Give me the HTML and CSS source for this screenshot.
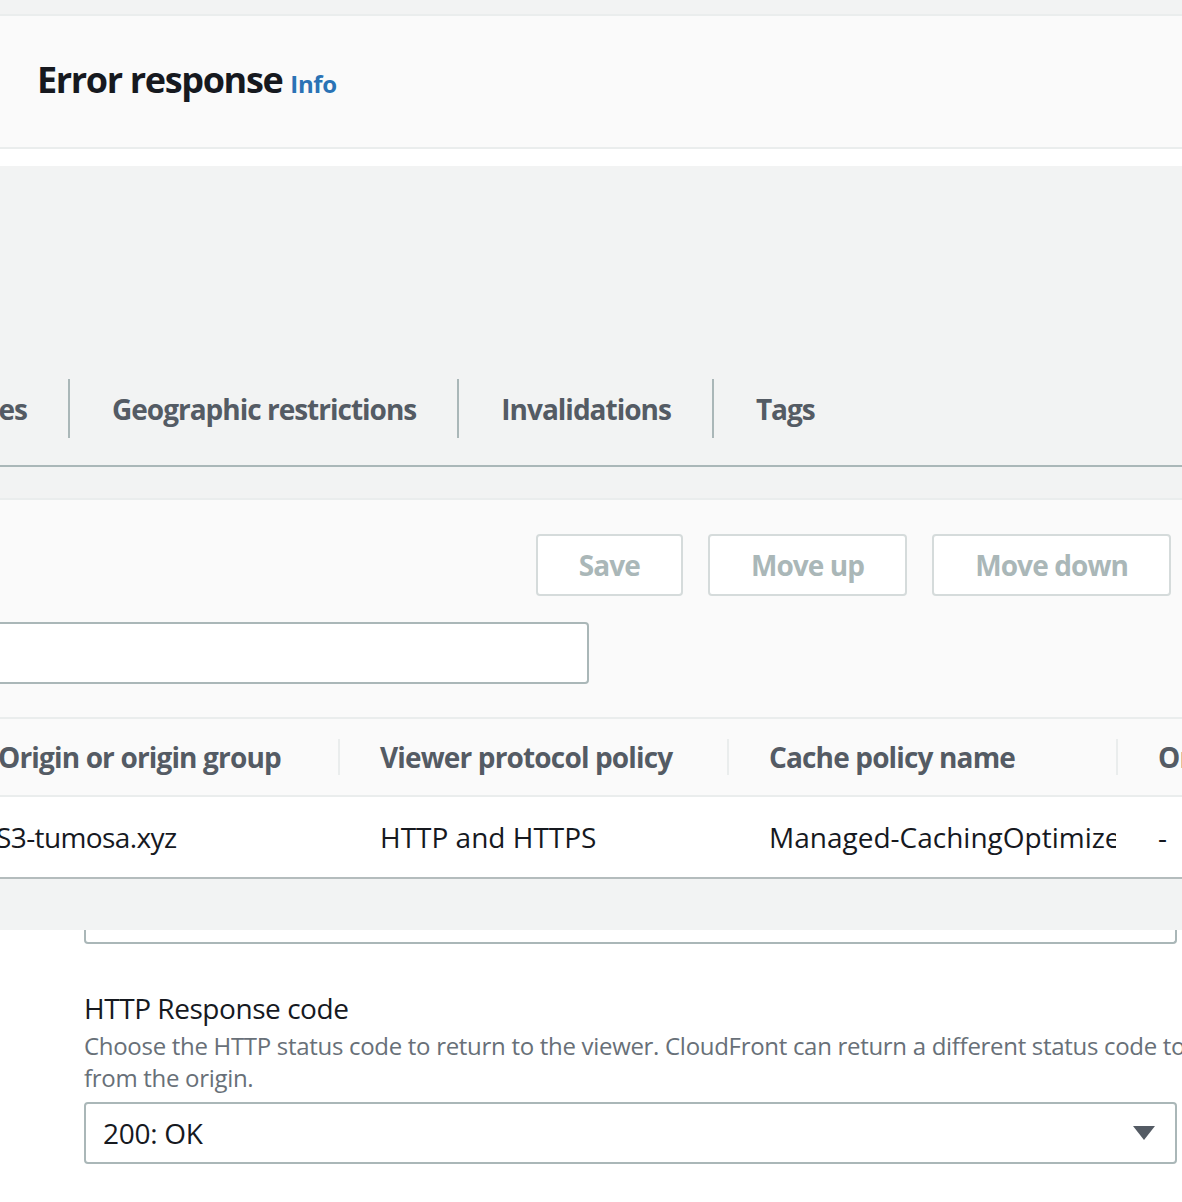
FILE: index.html
```html
<!DOCTYPE html>
<html lang="en">
<head>
<meta charset="utf-8">
<title>Error response</title>
<link rel="stylesheet" href="styles.css">
</head>
<body>
<div class="top-band"></div>
<header class="page-header">
  <h1 class="page-title">Error response<a class="info-link" href="#">Info</a></h1>
</header>
<div class="spacer"></div>
<div class="tabs-area">
  <nav class="tabs">
    <span class="tab tab-first">Error pages</span>
    <span class="tab">Geographic restrictions</span>
    <span class="tab">Invalidations</span>
    <span class="tab">Tags</span>
  </nav>
</div>
<section class="behaviors">
  <div class="actions">
    <button class="btn" disabled>Save</button>
    <button class="btn" disabled>Move up</button>
    <button class="btn" disabled>Move down</button>
  </div>
  <div class="search-row">
    <input class="search" type="text" aria-label="Filter">
  </div>
</section>
<div class="table">
  <div class="thead">
    <div class="th th-first">Origin or origin group</div>
    <div class="th">Viewer protocol policy</div>
    <div class="th">Cache policy name</div>
    <div class="th">Origin request policy</div>
  </div>
  <div class="trow">
    <div class="td">S3-tumosa.xyz</div>
    <div class="td">HTTP and HTTPS</div>
    <div class="td">Managed-CachingOptimized</div>
    <div class="td">-</div>
  </div>
</div>
<div class="gray-strip"></div>
<main class="form">
  <div class="field-tail"></div>
  <div class="field">
    <label class="label" for="code">HTTP Response code</label>
    <p class="desc">Choose the HTTP status code to return to the viewer. CloudFront can return a different status code to the viewer than the one it received<br>from the origin.</p>
    <div class="select" id="code">
      <span class="select-value">200: OK</span>
      <svg class="caret" width="22" height="16" viewBox="0 0 22 16" aria-hidden="true"><path d="M0 1h22L11 15z" fill="#545b64"/></svg>
    </div>
  </div>
</main>
</body>
</html>
```

FILE: styles.css
```css
* { box-sizing: border-box; }
html, body { margin: 0; padding: 0; }
body {
  width: 1182px;
  height: 1202px;
  overflow: hidden;
  background: #ffffff;
  font-family: "Open Sans", "Noto Sans", sans-serif;
  color: #16191f;
}
.top-band {
  height: 14px;
  background: #f2f3f3;
}
.page-header {
  height: 135px;
  background: #fafafa;
  border-top: 2px solid #eaeded;
  border-bottom: 2px solid #eaeded;
  display: flex;
  align-items: center;
  padding-left: 37px;
}
.page-title {
  margin: 0;
  font-size: 36px;
  font-weight: 700;
  line-height: 44px;
  color: #16191f;
  letter-spacing: -1.35px;
}
.info-link {
  font-size: 24px;
  font-weight: 700;
  color: #2a72b5;
  text-decoration: none;
  margin-left: 8px;
  letter-spacing: -0.4px;
}
.spacer {
  height: 17px;
  background: #ffffff;
}
.tabs-area {
  height: 332px;
  background: #f2f3f3;
  padding-top: 213px;
}
.tabs {
  display: flex;
  height: 88px;
  border-bottom: 2px solid #aab7b8;
}
.tab {
  flex: none;
  height: 59px;
  line-height: 61px;
  padding: 0 41px 0 42px;
  border-left: 2px solid #aab7b8;
  font-size: 28px;
  font-weight: 700;
  color: #545b64;
  white-space: nowrap;
  letter-spacing: -1px;
}
.tab-first {
  width: 68px;
  border-left: none;
  padding: 0 41px 0 0;
  display: flex;
  justify-content: flex-end;
}
.behaviors {
  height: 221px;
  background: #fafafa;
  border-top: 2px solid #eaeded;
  border-bottom: 2px solid #eaeded;
  padding-top: 34px;
}
.actions {
  display: flex;
  justify-content: flex-end;
  gap: 25px;
  padding-right: 11px;
}
.btn {
  height: 62px;
  padding: 0 41px;
  background: #ffffff;
  border: 2px solid #d5dbdb;
  border-radius: 4px;
  font-family: inherit;
  font-size: 28px;
  font-weight: 700;
  color: #aab7b8;
  letter-spacing: -0.9px;
}
.search-row {
  margin-top: 26px;
  display: flex;
}
.search {
  width: 620px;
  height: 62px;
  margin-left: -31px;
  background: #ffffff;
  border: 2px solid #aab7b8;
  border-radius: 4px;
}
.table {
  margin-left: -44px;
  width: 1300px;
}
.thead, .trow {
  display: grid;
  grid-template-columns: 382px 389px 389px 140px;
}
.thead {
  height: 78px;
  background: #fafafa;
  border-bottom: 2px solid #eaeded;
  align-items: center;
}
.th {
  height: 36px;
  line-height: 37px;
  padding-left: 40px;
  border-left: 2px solid #eaeded;
  font-size: 28px;
  font-weight: 700;
  color: #545b64;
  white-space: nowrap;
  overflow: hidden;
  letter-spacing: -0.85px;
}
.th-first {
  border-left: none;
  padding-left: 42px;
}
.trow {
  height: 82px;
  background: #ffffff;
  border-bottom: 2px solid #b4bcbd;
  align-items: center;
}
.td {
  padding-left: 42px;
  font-size: 28px;
  line-height: 40px;
  color: #16191f;
  white-space: nowrap;
  overflow: hidden;
}
.td:first-child {
  padding-left: 40px;
  letter-spacing: -0.6px;
}
.gray-strip {
  height: 51px;
  background: #f2f3f3;
}
.form {
  padding-left: 84px;
}
.field-tail {
  width: 1093px;
  height: 14px;
  border: 2px solid #aab7b8;
  border-top: none;
  border-radius: 0 0 4px 4px;
  background: #ffffff;
}
.field {
  padding-top: 44px;
}
.label {
  display: block;
  font-size: 28px;
  line-height: 40px;
  color: #16191f;
  margin-bottom: 2px;
  letter-spacing: -0.45px;
}
.desc {
  margin: 0 0 8px;
  font-size: 24px;
  line-height: 32px;
  color: #687078;
  white-space: nowrap;
  letter-spacing: -0.3px;
}
.select {
  width: 1093px;
  height: 62px;
  border: 2px solid #aab7b8;
  border-radius: 4px;
  background: #ffffff;
  display: flex;
  align-items: center;
  justify-content: space-between;
  padding: 0 20px 0 17px;
}
.select-value {
  font-size: 28px;
  color: #16191f;
  letter-spacing: -0.3px;
}
.caret {
  display: block;
}
```
